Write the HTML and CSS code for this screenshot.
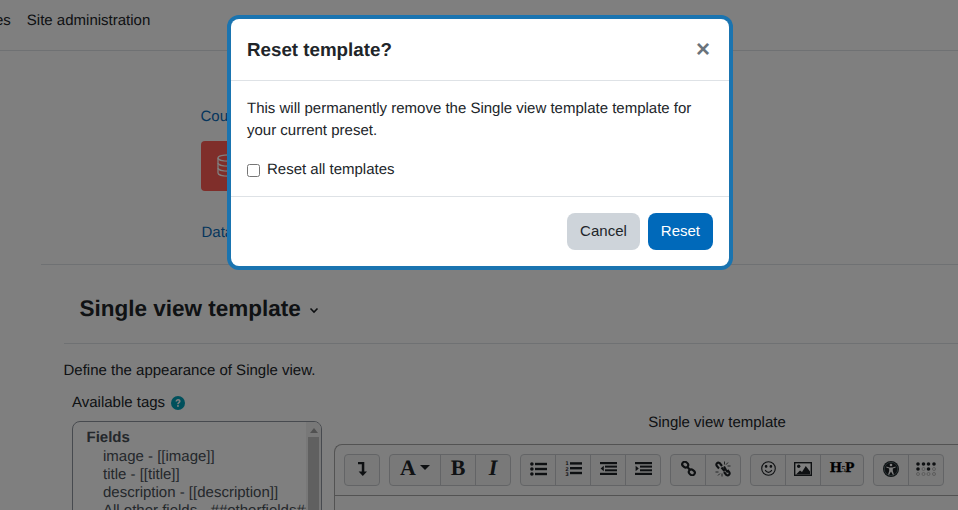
FILE: index.html
```html
<!DOCTYPE html>
<html lang="en">
<head>
<meta charset="utf-8">
<title>Reset template?</title>
<link rel="stylesheet" href="styles.css">
</head>
<body>
<div class="page">
  <nav class="topnav"><span class="nav-clipped">Courses</span><span class="nav-item">Site administration</span></nav>
  <section class="course">
    <a class="link crumb" href="#">Course</a>
    <div class="activity-icon">
      <svg width="24" height="23" viewBox="0 0 24 23" fill="none" stroke="#fff" stroke-width="1.300"><ellipse cx="12" cy="4" rx="11" ry="3.200"/><path d="M1 4v15c0 1.800 5 3.200 11 3.200S23 20.800 23 19V4"/><path d="M1 9c0 1.800 5 3.200 11 3.200S23 10.800 23 9M1 14c0 1.800 5 3.200 11 3.200S23 15.800 23 14"/></svg>
    </div>
    <a class="link tab" href="#">Database</a>
  </section>
  <section class="content">
    <div class="heading-row">
      <h2 class="heading">Single view template</h2>
      <svg class="chev" width="10" height="10" viewBox="0 0 10 10" fill="none" stroke="#1d2125" stroke-width="1.600"><path d="M1.500 3.500 5 7l3.500-3.500"/></svg>
    </div>
    <p class="define">Define the appearance of Single view.</p>
    <div class="columns">
      <div class="tags">
        <div class="tags-title">Available tags
          <svg class="help" width="14" height="14" viewBox="0 0 14 14"><circle cx="7" cy="7" r="7" fill="#00a0b8"/><path d="M4.500 5.400C4.600 3.900 5.700 3 7.100 3c1.400 0 2.500.9 2.500 2.200 0 1.800-1.900 1.700-1.900 3.100H6.200c0-2.100 1.700-2.100 1.700-3.100 0-.5-.3-.8-.8-.8-.6 0-.9.4-1 1z" fill="#fff"/><rect x="6.100" y="9.100" width="1.700" height="1.700" fill="#fff"/></svg>
        </div>
        <div class="tagbox">
          <div class="tag-list">
            <div class="tag-group">Fields</div>
            <div class="tag-item">image - [[image]]</div>
            <div class="tag-item">title - [[title]]</div>
            <div class="tag-item">description - [[description]]</div>
            <div class="tag-item">All other fields - ##otherfields##</div>
          </div>
          <div class="scrollbar"><span class="scroll-up"></span><span class="scroll-thumb"></span></div>
        </div>
      </div>
      <div class="editor-col">
        <div class="editor-title">Single view template</div>
        <div class="editor">
          <div class="toolbar">
            <div class="group">
              <span class="tb w34"><svg width="9" height="14" viewBox="0 0 9 14" fill="#1d2125"><path d="M0 0h6.300v9.500H9L4.800 14 .6 9.500h3.200V2.300H0z"/></svg></span>
            </div>
            <div class="group">
              <span class="tb w50 glyph">A<i class="caret"></i></span>
              <span class="tb w35 glyph">B</span>
              <span class="tb w35 glyph ital">I</span>
            </div>
            <div class="group">
              <span class="tb w34"><svg width="17" height="14" viewBox="0 0 17 14" fill="#1d2125"><circle cx="1.900" cy="2" r="1.800"/><circle cx="1.900" cy="7" r="1.800"/><circle cx="1.900" cy="12" r="1.800"/><rect x="5" y=".8" width="12" height="2.400"/><rect x="5" y="5.800" width="12" height="2.400"/><rect x="5" y="10.800" width="12" height="2.400"/></svg></span>
              <span class="tb w35"><svg width="17" height="17" viewBox="0 0 17 17" fill="#1d2125"><rect x="5" y="2.200" width="12" height="2.400"/><rect x="5" y="7" width="12" height="2.400"/><rect x="5" y="11.800" width="12" height="2.400"/><text class="num" x=".5" y="5">1</text><text class="num" x=".5" y="10.500">2</text><text class="num" x=".5" y="15.500">3</text></svg></span>
              <span class="tb w35"><svg width="17" height="13" viewBox="0 0 17 13" fill="#1d2125"><rect width="17" height="2.200"/><rect x="5" y="3.600" width="12" height="2"/><rect x="5" y="7.300" width="12" height="2"/><rect y="10.800" width="17" height="2.200"/><path d="M3.800 3.800v5.400L.6 6.500z"/></svg></span>
              <span class="tb w35"><svg width="17" height="13" viewBox="0 0 17 13" fill="#1d2125"><rect width="17" height="2.200"/><rect x="5" y="3.600" width="12" height="2"/><rect x="5" y="7.300" width="12" height="2"/><rect y="10.800" width="17" height="2.200"/><path d="M.6 3.800v5.400l3.200-2.700z"/></svg></span>
            </div>
            <div class="group">
              <span class="tb w34"><svg width="15" height="15" viewBox="0 0 15 15" fill="none" stroke="#1d2125" stroke-width="2.100"><rect x="1.100" y="1.100" width="6.200" height="5" rx="2.500" transform="rotate(40 4.200 3.600)"/><rect x="7.700" y="8.900" width="6.200" height="5" rx="2.500" transform="rotate(40 10.800 11.400)"/><path d="M6 5.500l3 3.500"/></svg></span>
              <span class="tb w35"><svg width="16" height="16" viewBox="0 0 16 16" fill="none" stroke="#1d2125"><path stroke-width="2.100" d="M7 5 4.700 2.100C2.600.8.500 2.800 1.800 5L4 7.500M9 5.500 11 9l1.800 2.500M9 11l2.300 2.900c2.100 1.300 4.200-.7 2.900-2.900L12.500 9M6.500 6.500l3 3.500"/><path stroke-width=".8" d="M9.500.5v3M13 1.500l-2 2.200M15.500 5H12.500M.5 11h3M3 14.500l2-2M7 15.500V12.500"/></svg></span>
            </div>
            <div class="group">
              <span class="tb w34"><svg width="15" height="15" viewBox="0 0 15 15" fill="none" stroke="#1d2125" stroke-width="1.100"><circle cx="7.500" cy="7.500" r="6.800"/><path d="M4.200 9c.7 1.600 1.900 2.400 3.300 2.400s2.600-.8 3.300-2.400"/><circle cx="5.100" cy="5.400" r=".8" fill="#1d2125"/><circle cx="9.900" cy="5.400" r=".8" fill="#1d2125"/></svg></span>
              <span class="tb w35"><svg width="18" height="14" viewBox="0 0 18 14"><rect x=".7" y=".7" width="16.600" height="12.600" fill="#fff" stroke="#1d2125" stroke-width="1.400"/><circle cx="4.700" cy="4.200" r="1.700" fill="#1d2125"/><path d="M2 12.500 6 8.500l2 1.500 3.800-6L16 9.500v3z" fill="#1d2125"/></svg></span>
              <span class="tb w43"><span class="hp">H<small>5</small>P</span></span>
            </div>
            <div class="group">
              <span class="tb w34"><svg width="16" height="16" viewBox="0 0 16 16"><circle cx="8" cy="8" r="8" fill="#1d2125"/><circle cx="8" cy="8" r="6.700" fill="none" stroke="#8aa" stroke-width=".5"/><circle cx="8" cy="4" r="1.300" fill="#fff"/><path d="M3.500 5.600 6.300 6.400h3.400l2.800-.8.200.9-2.900 1v2.400l1.100 3.700-.9.300L8 10.400l-2 3.500-.9-.3 1.100-3.700V7.500l-2.900-1z" fill="#fff"/></svg></span>
              <span class="tb w35"><svg width="20" height="14" viewBox="0 0 20 14"><g fill="#1d2125"><circle cx="2" cy="2" r="1.800"/><circle cx="7.500" cy="2" r="1.800"/><circle cx="2" cy="7" r="1.800"/><circle cx="12.500" cy="2" r="1.800"/><circle cx="18" cy="2" r="1.800"/><circle cx="12.500" cy="7" r="1.800"/></g><g fill="none" stroke="#aaa" stroke-width=".8"><circle cx="7.500" cy="7" r="1.500"/><circle cx="2" cy="12" r="1.500"/><circle cx="7.500" cy="12" r="1.500"/><circle cx="18" cy="7" r="1.500"/><circle cx="12.500" cy="12" r="1.500"/><circle cx="18" cy="12" r="1.500"/></g></svg></span>
            </div>
          </div>
          <div class="editor-body"></div>
        </div>
      </div>
    </div>
  </section>
</div>

<div class="backdrop"></div>

<div class="modal">
  <header class="modal-header">
    <h5 class="modal-title">Reset template?</h5>
    <span class="close">&times;</span>
  </header>
  <div class="modal-body">
    <p class="modal-text">This will permanently remove the Single view template template for your current preset.</p>
    <label class="check-row"><input class="check" type="checkbox"><span>Reset all templates</span></label>
  </div>
  <footer class="modal-footer">
    <button class="btn btn-secondary" type="button">Cancel</button>
    <button class="btn btn-primary" type="button">Reset</button>
  </footer>
</div>
</body>
</html>
```
FILE: styles.css
```css
* { box-sizing: border-box; }
html, body { margin: 0; padding: 0; }
body {
  width: 958px;
  height: 510px;
  overflow: hidden;
  position: relative;
  background: #fff;
  color: #212529;
  font-family: "Liberation Sans", Arial, sans-serif;
  font-size: 15px;
  line-height: 22.5px;
  text-rendering: geometricPrecision;
}
.page { height: 510px; overflow: hidden; }

.topnav {
  height: 51px;
  border-bottom: 1px solid #dee2e6;
  display: flex;
  gap: 16px;
  padding-top: 10px;
  margin-left: -45px;
}
.nav-item, .nav-clipped { white-space: nowrap; }

.course { height: 214px; padding: 55px 0 0 159.5px; border-bottom: 1px solid #dee2e6; margin-left: 41px; }
.link { color: #0a6cba; text-decoration: none; display: block; width: max-content; }
.activity-icon {
  width: 50px;
  height: 50px;
  margin-top: 12px;
  margin-left: .5px;
  border-radius: 4px;
  background: #ff5c54;
  display: flex;
  align-items: center;
  padding-left: 16px;
}
.tab { margin-top: 31px; margin-left: 1px; }

.content { margin-left: 64px; }
.heading-row {
  height: 79px;
  display: flex;
  align-items: center;
  gap: 8px;
  padding: 8px 0 0 15.5px;
  border-bottom: 1px solid #dee2e6;
}
.heading { margin: 0; font-size: 22.5px; line-height: 27px; font-weight: 700; }
.chev { margin-top: 3px; }
.define { margin: 16px 0 0 -.5px; }
.columns { display: flex; gap: 12px; margin-left: 8px; margin-top: 9px; }
.tags { width: 250px; flex: none; }
.tags-title { display: flex; align-items: center; gap: 6px; height: 22.5px; }
.help { flex: none; }
.tagbox {
  margin-top: 7px;
  height: 160px;
  border: 1px solid #8f959e;
  border-radius: 8px;
  display: flex;
  overflow: hidden;
  color: #495057;
}
.tag-list { flex: 1; padding: 7px 0 0 13.5px; line-height: 18px; white-space: nowrap; overflow: hidden; }
.tag-group { font-weight: 700; margin-bottom: 1px; }
.tag-item { padding-left: 16.5px; }
.scrollbar { width: 15px; flex: none; background: #f1f1f1; display: flex; flex-direction: column; align-items: center; padding-top: 6px; }
.scroll-up { width: 0; height: 0; border-left: 4px solid transparent; border-right: 4px solid transparent; border-bottom: 5px solid #a3a3a3; }
.scroll-thumb { width: 11px; height: 120px; margin-top: 4px; background: #c1c1c1; }

.editor-col { flex: 1; margin-top: 20px; }
.editor-title { text-align: center; height: 22px; width: 766px; }
.editor { margin-top: 10px; width: 640px; height: 100px; border: 1px solid #a6a6a6; border-right: 0; border-radius: 8px 0 0 0; background: #fafafa; }
.toolbar { height: 51px; border-bottom: 1px solid #a6a6a6; display: flex; gap: 9px; padding: 9px 0 0 9px; align-items: flex-start; }
.group { display: flex; height: 32px; border: 1px solid #c6c9cd; border-radius: 4px; background: #f3f3f3; flex: none; }
.tb { display: flex; align-items: center; justify-content: center; height: 30px; padding-bottom: 2px; border-left: 1px solid #c6c9cd; flex: none; }
.tb:first-child { border-left: 0; }
.w34 { width: 34px; }
.w35 { width: 35px; }
.w43 { width: 43px; }
.w50 { width: 50px; }
.glyph { font-family: "Liberation Serif", serif; font-weight: 700; font-size: 22px; }
.ital { font-style: italic; }
.caret { display: inline-block; width: 0; height: 0; margin: 0 0 2px 4px; border-left: 5px solid transparent; border-right: 5px solid transparent; border-top: 5px solid #1d2125; }
.num { font-size: 5.5px; font-weight: 700; font-family: "Liberation Sans", sans-serif; }
.hp { font-weight: 700; font-size: 15px; letter-spacing: -.5px; color: #000; font-family: "Liberation Serif", serif; -webkit-text-stroke: .4px #000; }
.hp small { font-size: 9px; font-weight: 400; -webkit-text-stroke: 0; }

.backdrop { position: absolute; inset: 0; background: rgba(0, 0, 0, .5); }

.modal {
  position: absolute;
  left: 231px;
  top: 19px;
  width: 498px;
  height: 247px;
  background: #fff;
  border-radius: 8px;
  box-shadow: 0 0 0 4px #1a74b0;
  display: flex;
  flex-direction: column;
}
.modal-header {
  height: 62px;
  border-bottom: 1px solid #dee2e6;
  display: flex;
  align-items: center;
  justify-content: space-between;
  padding: 0 16px;
}
.modal-title { margin: 0; font-size: 18.75px; font-weight: 700; line-height: 28px; }
.close { font-size: 24px; font-weight: 700; color: #6a737b; line-height: 22px; width: 20px; text-align: center; }
.modal-body { height: 116px; padding: 17px 16px 0; border-bottom: 1px solid #dee2e6; }
.modal-text { margin: 0; line-height: 22px; }
.check-row { display: flex; align-items: center; gap: 7px; margin-top: 17px; }
.check { width: 13px; height: 13px; margin: 0; flex: none; }
.modal-footer { display: flex; justify-content: flex-end; gap: 8px; padding: 16px; }
.btn {
  height: 37px;
  padding: 0 13px;
  border: 0;
  border-radius: 8px;
  font: inherit;
  line-height: 22.5px;
}
.btn-secondary { background: #ced4da; color: #212529; }
.btn-primary { background: #0069ba; color: #fff; }
```
